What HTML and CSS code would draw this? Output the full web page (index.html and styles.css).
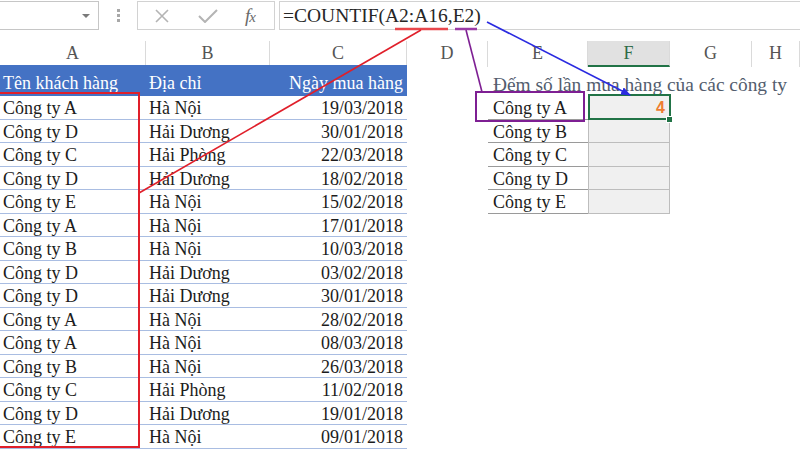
FILE: index.html
```html
<!DOCTYPE html>
<html lang="vi">
<head>
<meta charset="utf-8">
<title>COUNTIF</title>
<link rel="stylesheet" href="styles.css">
</head>
<body>
<div class="toolbar">
  <div class="namebox"><span class="caret"></span></div>
  <div class="grip"><span></span><span></span><span></span></div>
  <div class="fxbox">
    <svg class="ico ico-x" width="16" height="14" viewBox="0 0 16 14"><path d="M2 1 L14 13 M14 1 L2 13" stroke="#b4b4b4" stroke-width="1.6" fill="none"/></svg>
    <svg class="ico ico-ok" width="20" height="14" viewBox="0 0 20 14"><path d="M1 7 L7 13 L19 1" stroke="#b4b4b4" stroke-width="2" fill="none"/></svg>
    <span class="fx"><i>f</i><i class="fx-x">x</i></span>
  </div>
  <div class="formula">=COUNTIF(A2:A16,E2)</div>
</div>

<div class="colheads">
  <div class="ch">A</div><div class="ch">B</div><div class="ch">C</div><div class="ch">D</div>
  <div class="ch">E</div><div class="ch ch-active">F</div><div class="ch">G</div><div class="ch">H</div>
</div>

<div class="sheet">
  <div class="row row-head">
    <div class="c th">Tên khách hàng</div>
    <div class="c th">Địa chỉ</div>
    <div class="c th num">Ngày mua hàng</div>
    <div class="c"></div>
    <div class="c title">Đếm số lần mua hàng của các công ty</div>
  </div>
  <div class="row"><div class="c td">Công ty A</div><div class="c td">Hà Nội</div><div class="c td num">19/03/2018</div><div class="c"></div><div class="c e">Công ty A</div><div class="c f active"><span class="res">4</span></div></div>
  <div class="row"><div class="c td">Công ty D</div><div class="c td">Hải Dương</div><div class="c td num">30/01/2018</div><div class="c"></div><div class="c e">Công ty B</div><div class="c f"></div></div>
  <div class="row"><div class="c td">Công ty C</div><div class="c td">Hải Phòng</div><div class="c td num">22/03/2018</div><div class="c"></div><div class="c e">Công ty C</div><div class="c f"></div></div>
  <div class="row"><div class="c td">Công ty D</div><div class="c td">Hải Dương</div><div class="c td num">18/02/2018</div><div class="c"></div><div class="c e">Công ty D</div><div class="c f"></div></div>
  <div class="row"><div class="c td">Công ty E</div><div class="c td">Hà Nội</div><div class="c td num">15/02/2018</div><div class="c"></div><div class="c e">Công ty E</div><div class="c f"></div></div>
  <div class="row"><div class="c td">Công ty A</div><div class="c td">Hà Nội</div><div class="c td num">17/01/2018</div></div>
  <div class="row"><div class="c td">Công ty B</div><div class="c td">Hà Nội</div><div class="c td num">10/03/2018</div></div>
  <div class="row"><div class="c td">Công ty D</div><div class="c td">Hải Dương</div><div class="c td num">03/02/2018</div></div>
  <div class="row"><div class="c td">Công ty D</div><div class="c td">Hải Dương</div><div class="c td num">30/01/2018</div></div>
  <div class="row"><div class="c td">Công ty A</div><div class="c td">Hà Nội</div><div class="c td num">28/02/2018</div></div>
  <div class="row"><div class="c td">Công ty A</div><div class="c td">Hà Nội</div><div class="c td num">08/03/2018</div></div>
  <div class="row"><div class="c td">Công ty B</div><div class="c td">Hà Nội</div><div class="c td num">26/03/2018</div></div>
  <div class="row"><div class="c td">Công ty C</div><div class="c td">Hải Phòng</div><div class="c td num">11/02/2018</div></div>
  <div class="row"><div class="c td">Công ty D</div><div class="c td">Hải Dương</div><div class="c td num">19/01/2018</div></div>
  <div class="row"><div class="c td">Công ty E</div><div class="c td">Hà Nội</div><div class="c td num">09/01/2018</div></div>
</div>

<svg class="annot" width="800" height="450" viewBox="0 0 800 450">
  <defs>
    <marker id="arr" markerWidth="10" markerHeight="8" refX="9" refY="4" orient="auto" markerUnits="userSpaceOnUse">
      <path d="M0 0 L10 4 L0 8 Z" fill="#2a2ae0"/>
    </marker>
  </defs>
  <line x1="395" y1="29" x2="448" y2="29" stroke="#e8474c" stroke-width="2.5"/>
  <line x1="455" y1="29" x2="477" y2="29" stroke="#9a3aa6" stroke-width="2.5"/>
  <line x1="421" y1="30" x2="139" y2="193" stroke="#e01f2a" stroke-width="1.6"/>
  <rect x="-3" y="93" width="142" height="354" fill="none" stroke="#e01f2a" stroke-width="2"/>
  <line x1="466" y1="30" x2="482" y2="92" stroke="#7e1f93" stroke-width="1.6"/>
  <rect x="476" y="92" width="108" height="29" fill="none" stroke="#7e1f93" stroke-width="2"/>
  <line x1="487" y1="22" x2="630" y2="95" stroke="#2a2ae0" stroke-width="1.6" marker-end="url(#arr)"/>
</svg>
</body>
</html>
```
FILE: styles.css
```css
* { box-sizing: border-box; }
html, body { margin: 0; padding: 0; }
body {
  width: 800px;
  height: 450px;
  overflow: hidden;
  background: #fff;
  font-family: "Liberation Serif", "Times New Roman", serif;
  color: #1c1c1c;
  position: relative;
}

/* formula bar */
.toolbar {
  display: flex;
  height: 31px;
  padding-top: 1px;
  align-items: flex-start;
}
.namebox {
  width: 99px;
  height: 29px;
  border: 1px solid #c6c6c6;
  border-left: none;
  display: flex;
  align-items: center;
  justify-content: flex-end;
  padding-right: 8px;
}
.caret {
  width: 0;
  height: 0;
  border-left: 4px solid transparent;
  border-right: 4px solid transparent;
  border-top: 4px solid #7a7a7a;
}
.grip {
  width: 38px;
  height: 29px;
  display: flex;
  flex-direction: column;
  align-items: center;
  justify-content: center;
  gap: 2px;
}
.grip span {
  width: 3px;
  height: 3px;
  background: #a8a8a8;
}
.fxbox {
  width: 138px;
  height: 29px;
  border: 1px solid #d2d2d2;
  display: flex;
  align-items: center;
  padding-left: 16px;
}
.ico { display: block; }
.ico-ok { margin-left: 28px; }
.fx {
  margin-left: 27px;
  font-family: "Liberation Serif", serif;
  color: #6a6a6a;
  font-size: 19px;
  line-height: 1;
  letter-spacing: -1px;
}
.fx .fx-x { font-size: 15px; }
.formula {
  margin-left: 4px;
  flex: 1;
  height: 29px;
  border: 1px solid #d2d2d2;
  border-right: none;
  padding-left: 3px;
  font-size: 19.5px;
  line-height: 27px;
  color: #262626;
}

/* column headers */
.colheads {
  display: grid;
  grid-template-columns: 146px 124px 137px 81px 100px 82px 82px 48px;
  margin-top: 10px;
  height: 24px;
}
.ch {
  border-right: 1px solid #dadada;
  text-align: center;
  font-size: 18px;
  line-height: 25px;
  color: #555;
}
.ch-active {
  background: #e1e1e1;
  border-bottom: 2px solid #217346;
  color: #2f6b48;
  line-height: 24px;
}

/* sheet */
.sheet { display: flex; flex-direction: column; }
.row {
  display: grid;
  grid-template-columns: 146px 124px 137px 81px 100px 82px 82px 48px;
  height: 23.5px;
  font-size: 18px;
}
.row-head { height: 31px; }
.c {
  white-space: nowrap;
  display: flex;
  align-items: center;
  padding-left: 3px;
  padding-top: 2px;
  line-height: 1;
}
.th {
  background: #4472c4;
  color: #fff;
  align-items: flex-end;
  padding-bottom: 4px;
}
.num { justify-content: flex-end; padding-left: 0; padding-right: 4px; }
.td { border-bottom: 1px solid #a9bde2; }
.title {
  grid-column: span 4;
  color: #535d6e;
  font-size: 19.4px;
  align-items: flex-end;
  padding-bottom: 2px;
  padding-left: 5px;
}
.e {
  border-bottom: 1px solid #9a9a9a;
  padding-left: 5px;
}
.f {
  background: #f0f0f0;
  border: 1px solid #bdbdbd;
  border-top: none;
  justify-content: flex-end;
  padding-right: 4px;
  position: relative;
}
.res {
  font-family: "Liberation Sans", Arial, sans-serif;
  font-weight: bold;
  color: #ed7d31;
  font-size: 16px;
}
.active::after {
  content: "";
  position: absolute;
  left: -1px;
  top: -2px;
  right: -2px;
  bottom: -1px;
  border: 2px solid #217346;
}
.active::before {
  content: "";
  position: absolute;
  right: -4px;
  bottom: -4px;
  width: 5px;
  height: 5px;
  background: #217346;
  border: 1px solid #fff;
  z-index: 2;
}

.annot {
  position: absolute;
  left: 0;
  top: 0;
  pointer-events: none;
}
```
